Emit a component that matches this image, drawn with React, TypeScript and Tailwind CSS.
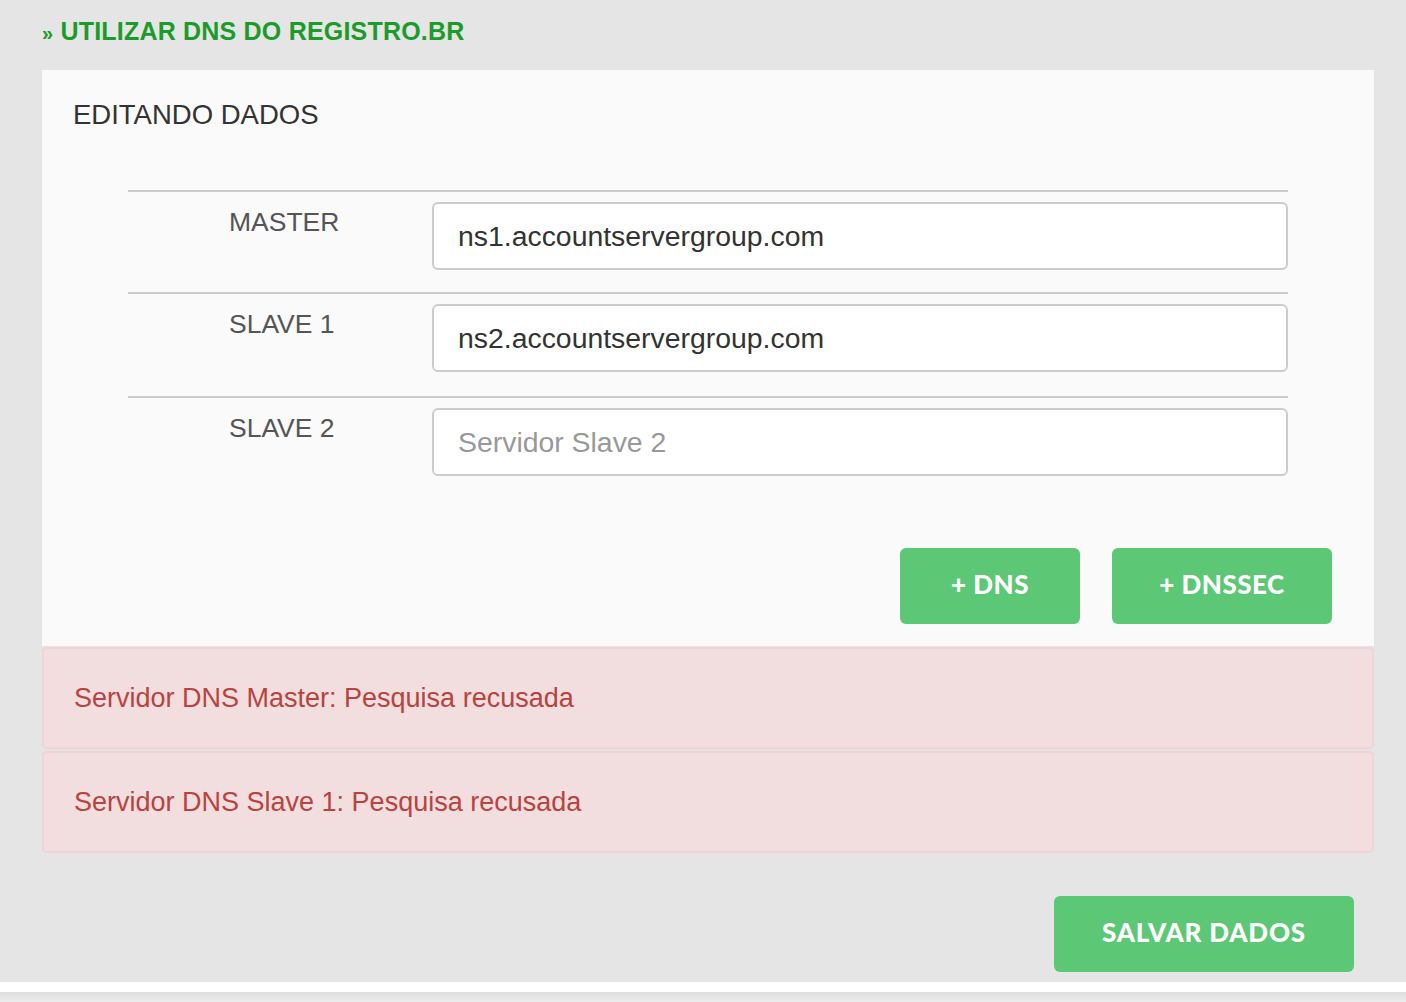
import React from "react";

const rows = [
  { label: "MASTER", value: "ns1.accountservergroup.com", placeholder: "Servidor Master", pb: "pb-[22px]" },
  { label: "SLAVE 1", value: "ns2.accountservergroup.com", placeholder: "Servidor Slave 1", pb: "pb-[24px]" },
  { label: "SLAVE 2", value: "", placeholder: "Servidor Slave 2", pb: "pb-[72px]" },
];

const btnFont = { fontFamily: "Lato, 'Open Sans', sans-serif" };

export default function App() {
  return (
    <div
      className="w-[1406px] h-[1002px] bg-[#e5e5e5] flex flex-col overflow-hidden"
      style={{ fontFamily: "'Liberation Sans', Arial, Helvetica, sans-serif" }}
    >
      <div className="px-[42px] pt-[16px] h-[70px]">
        <h2 className="text-[25px] leading-[30px] font-bold text-[#1c9b2b] tracking-[0.2px]">
          <span className="text-[20px]">»</span> UTILIZAR DNS DO REGISTRO.BR
        </h2>
      </div>

      <div className="mx-[42px] w-[1332px]">
        <div className="bg-[#fafafa] pt-[97px] pb-[22px] relative">
          <div className="absolute left-[31px] top-[29px] text-[27.5px] leading-[32px] text-[#333] font-light">
            EDITANDO DADOS
          </div>
          <div className="mx-[86px] mt-[23px]">
            {rows.map((r) => (
              <div
                key={r.label}
                className={`flex border-t-2 border-[#cbcbcb] pt-[10px] ${r.pb}`}
              >
                <div className="w-[304px] pl-[101px] pt-[5px] text-[26.5px] leading-[30px] text-[#555]">
                  {r.label}
                </div>
                <input
                  readOnly
                  defaultValue={r.value}
                  placeholder={r.placeholder}
                  className="flex-1 h-[68px] border-2 border-[#cccccc] rounded-[6px] bg-white px-[24px] text-[28.4px] text-[#333] placeholder:text-[#999] outline-none"
                  style={{ fontFamily: "'Liberation Sans', Arial, sans-serif" }}
                />
              </div>
            ))}
          </div>
          <div className="flex justify-end gap-[32px] pr-[42px]">
            <button
              className="w-[180px] h-[76px] rounded-[6px] bg-[#5cc875] text-white text-[26px] font-black tracking-[0.5px] pb-[4px]"
              style={btnFont}
            >
              + DNS
            </button>
            <button
              className="w-[220px] h-[76px] rounded-[6px] bg-[#5cc875] text-white text-[26px] font-black tracking-[0.5px] pb-[4px]"
              style={btnFont}
            >
              + DNSSEC
            </button>
          </div>
        </div>

        <div className="mt-[1px] flex flex-col gap-[2px]">
          <div className="h-[102px] rounded-[5px] border-2 border-[#efd3d6] bg-[#f2dede] flex items-center pl-[30px] text-[27px] text-[#b9433f]">
            Servidor DNS Master: Pesquisa recusada
          </div>
          <div className="h-[102px] rounded-[5px] border-2 border-[#efd3d6] bg-[#f2dede] flex items-center pl-[30px] text-[27px] text-[#b9433f]">
            Servidor DNS Slave 1: Pesquisa recusada
          </div>
        </div>

        <div className="flex justify-end pr-[20px] mt-[43px]">
          <button
            className="w-[300px] h-[76px] rounded-[6px] bg-[#5cc875] text-white text-[26px] font-black tracking-[0.8px] pb-[4px]"
            style={btnFont}
          >
            SALVAR DADOS
          </button>
        </div>
      </div>

      <div className="mt-[10px] h-[10px] bg-white shrink-0" />
      <div className="flex-1 bg-gradient-to-b from-[#dedede] to-[#ececec]" />
    </div>
  );
}
